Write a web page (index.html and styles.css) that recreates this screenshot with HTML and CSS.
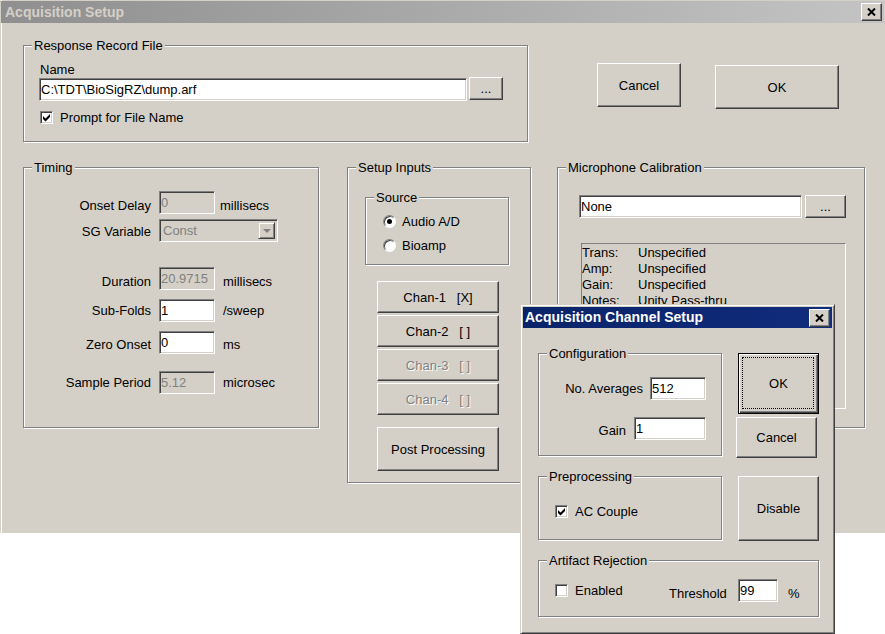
FILE: index.html
```html
<!DOCTYPE html>
<html lang="en">
<head>
    <meta charset="UTF-8">
    <title>Acquisition Setup</title>
    <link rel="stylesheet" href="styles.css">
</head>
<body>
    <!-- Main window -->
    <div class="window main-window">
        <div class="titlebar inactive">
            <span class="title">Acquisition Setup</span>
            <span class="close-btn">
                <svg width="9" height="8" viewBox="0 0 9 8"><path d="M1 0.5 L8 7.5 M8 0.5 L1 7.5" stroke="#000" stroke-width="2"/></svg>
            </span>
        </div>

        <div class="main-body">
            <div class="top-row">
                <div class="group response-group">
                    <span class="group-title">Response Record File</span>
                    <div class="name-label">Name</div>
                    <div class="file-row">
                        <input class="field file-field" type="text" value="C:\TDT\BioSigRZ\dump.arf">
                        <button class="btn browse-btn">...</button>
                    </div>
                    <div class="check-row prompt-row">
                        <span class="checkbox checked">
                            <svg width="13" height="13" viewBox="0 0 13 13"><path d="M3 5 L5.5 7.5 L10 3 L10 6 L5.5 10.5 L3 8 Z" fill="#000"/></svg>
                        </span>
                        <span>Prompt for File Name</span>
                    </div>
                </div>
                <button class="btn main-cancel">Cancel</button>
                <button class="btn main-ok">OK</button>
            </div>

            <div class="mid-row">
                <!-- Timing -->
                <div class="group timing-group">
                    <span class="group-title">Timing</span>
                    <div class="field-row onset-row drop-4">
                        <span class="field-label">Onset Delay</span>
                        <input class="field disabled small-field" type="text" value="0" disabled>
                        <span class="unit first-unit">millisecs</span>
                    </div>
                    <div class="field-row sg-row">
                        <span class="field-label">SG Variable</span>
                        <div class="combo">
                            <span class="combo-text">Const</span>
                            <span class="combo-btn"><span class="arrow"></span></span>
                        </div>
                    </div>
                    <div class="field-row duration-row drop-4">
                        <span class="field-label">Duration</span>
                        <input class="field disabled small-field" type="text" value="20.9715" disabled>
                        <span class="unit">millisecs</span>
                    </div>
                    <div class="field-row folds-row">
                        <span class="field-label">Sub-Folds</span>
                        <input class="field small-field" type="text" value="1">
                        <span class="unit">/sweep</span>
                    </div>
                    <div class="field-row zero-row drop-2">
                        <span class="field-label">Zero Onset</span>
                        <input class="field small-field" type="text" value="0">
                        <span class="unit">ms</span>
                    </div>
                    <div class="field-row sample-row">
                        <span class="field-label">Sample Period</span>
                        <input class="field disabled small-field" type="text" value="5.12" disabled>
                        <span class="unit">microsec</span>
                    </div>
                </div>

                <!-- Setup Inputs -->
                <div class="group inputs-group">
                    <span class="group-title">Setup Inputs</span>
                    <div class="group source-group">
                        <span class="group-title">Source</span>
                        <div class="radio-row">
                            <span class="radio selected"><span class="dot"></span></span>
                            <span>Audio A/D</span>
                        </div>
                        <div class="radio-row second">
                            <span class="radio"></span>
                            <span>Bioamp</span>
                        </div>
                    </div>
                    <div class="chan-list">
                        <button class="btn chan-btn">Chan-1&nbsp;&nbsp;&nbsp;[X]</button>
                        <button class="btn chan-btn">Chan-2&nbsp;&nbsp;&nbsp;[&nbsp;]</button>
                        <button class="btn chan-btn off">Chan-3&nbsp;&nbsp;&nbsp;[&nbsp;]</button>
                        <button class="btn chan-btn off">Chan-4&nbsp;&nbsp;&nbsp;[&nbsp;]</button>
                        <button class="btn post-btn">Post Processing</button>
                    </div>
                </div>

                <!-- Microphone Calibration -->
                <div class="group mic-group">
                    <span class="group-title">Microphone Calibration</span>
                    <div class="mic-row">
                        <input class="field mic-field" type="text" value="None">
                        <button class="btn mic-browse">...</button>
                    </div>
                    <div class="mic-info">
                        <div class="info-line"><span class="info-key">Trans:</span><span>Unspecified</span></div>
                        <div class="info-line"><span class="info-key">Amp:</span><span>Unspecified</span></div>
                        <div class="info-line"><span class="info-key">Gain:</span><span>Unspecified</span></div>
                        <div class="info-line"><span class="info-key">Notes:</span><span>Unity Pass-thru</span></div>
                    </div>
                </div>
            </div>
        </div>
    </div>

    <!-- Child dialog on top -->
    <div class="window channel-dialog">
        <div class="titlebar active">
            <span class="title">Acquisition Channel Setup</span>
            <span class="close-btn">
                <svg width="9" height="8" viewBox="0 0 9 8"><path d="M1 0.5 L8 7.5 M8 0.5 L1 7.5" stroke="#000" stroke-width="2"/></svg>
            </span>
        </div>
        <div class="dialog-body">
            <div class="group config-group">
                <span class="group-title">Configuration</span>
                <div class="cfg-row">
                    <span class="cfg-label">No. Averages</span>
                    <input class="field avg-field" type="text" value="512">
                </div>
                <div class="cfg-row gain-row">
                    <span class="cfg-label">Gain</span>
                    <input class="field gain-field" type="text" value="1">
                </div>
            </div>
            <div class="dialog-buttons">
                <button class="btn default-btn">OK</button>
                <button class="btn dlg-cancel">Cancel</button>
            </div>

            <div class="group pre-group">
                <span class="group-title">Preprocessing</span>
                <div class="check-row">
                    <span class="checkbox checked">
                        <svg width="13" height="13" viewBox="0 0 13 13"><path d="M3 5 L5.5 7.5 L10 3 L10 6 L5.5 10.5 L3 8 Z" fill="#000"/></svg>
                    </span>
                    <span>AC Couple</span>
                </div>
            </div>
            <button class="btn disable-btn">Disable</button>

            <div class="group artifact-group">
                <span class="group-title">Artifact Rejection</span>
                <div class="artifact-row">
                    <div class="check-row enabled-item">
                        <span class="checkbox"></span>
                        <span>Enabled</span>
                    </div>
                    <span class="threshold-label">Threshold</span>
                    <input class="field threshold-field" type="text" value="99">
                    <span class="percent">%</span>
                </div>
            </div>
        </div>
    </div>
</body>
</html>
```

FILE: styles.css
```css
* {
    box-sizing: border-box;
}
body {
    margin: 0;
    background-color: #fff;
    font-family: "Liberation Sans", Arial, sans-serif;
    font-size: 13px;
    line-height: 15px;
    color: #000;
}
input, button {
    font-family: "Liberation Sans", Arial, sans-serif;
    font-size: 13px;
    color: #000;
    margin: 0;
    outline: none;
}

/* windows */
.window {
    background-color: #d4d0c8;
}
.main-window {
    width: 885px;
    height: 533px;
    padding-top: 1px;
    box-shadow: inset 1px 0 #d4d0c8, inset 2px 0 #fff;
}
.channel-dialog {
    position: absolute;
    left: 520px;
    top: 304px;
    width: 315px;
    height: 330px;
    padding: 2px;
    border: 1px solid;
    border-color: #d4d0c8 #404040 #404040 #d4d0c8;
    box-shadow: inset 1px 1px #fff, inset -1px -1px #808080;
}

.titlebar {
    display: flex;
    align-items: center;
    justify-content: space-between;
    height: 22px;
    padding: 0 2px 0 4px;
    font-size: 14px;
    font-weight: bold;
}
.titlebar.inactive {
    margin: 0 1px 0 1px;
    background: linear-gradient(to right, #8f8f8f, #c4c4c4);
    color: #d4d0c8;
}
.titlebar.active {
    height: 21px;
    padding-left: 2px;
    background: linear-gradient(to right, #0a246a, #102c7c);
    color: #fff;
}
.close-btn {
    display: flex;
    align-items: center;
    justify-content: center;
    width: 21px;
    height: 18px;
    background-color: #d4d0c8;
    border: 1px solid;
    border-color: #fff #404040 #404040 #fff;
    box-shadow: inset -1px -1px #808080;
}

/* common controls */
.btn {
    background-color: #d4d0c8;
    border: 1px solid;
    border-color: #fff #404040 #404040 #fff;
    box-shadow: inset -1px -1px #808080;
    padding: 0;
    cursor: pointer;
}
.field {
    height: 23px;
    padding: 0 1px;
    background-color: #fff;
    border: 1px solid;
    border-color: #808080 #fff #fff #808080;
    box-shadow: inset 1px 1px #404040, inset -1px -1px #d4d0c8;
}
.field.disabled {
    background-color: #d4d0c8;
    color: #808080;
}
.group {
    position: relative;
    border: 1px solid #808080;
    box-shadow: inset 1px 1px #fff, 1px 1px #fff;
}
.group-title {
    position: absolute;
    top: -8px;
    left: 8px;
    padding: 0 2px;
    background-color: #d4d0c8;
    white-space: nowrap;
}
.check-row {
    display: flex;
    align-items: center;
    height: 15px;
}
.checkbox {
    flex: none;
    width: 13px;
    height: 13px;
    margin-right: 7px;
    background-color: #fff;
    border: 1px solid;
    border-color: #808080 #fff #fff #808080;
    box-shadow: inset 1px 1px #404040, inset -1px -1px #d4d0c8;
}
.checkbox svg {
    display: block;
    margin: -1px 0 0 -1px;
}
.radio {
    position: relative;
    flex: none;
    width: 13px;
    height: 13px;
    margin-right: 6px;
    border-radius: 50%;
    background-color: #fff;
    border: 1px solid;
    border-color: #808080 #fff #fff #808080;
    box-shadow: inset 1px 1px #404040;
}
.radio .dot {
    position: absolute;
    left: 3px;
    top: 3px;
    width: 5px;
    height: 5px;
    border-radius: 50%;
    background-color: #000;
}

/* main body */
.main-body {
    padding-left: 23px;
}
.top-row {
    display: flex;
    align-items: flex-start;
    margin-top: 22px;
}
.response-group {
    width: 505px;
    height: 97px;
    padding: 16px 0 0 15px;
}
.name-label {
    margin-left: 1px;
}
.file-row {
    display: flex;
    margin-top: 1px;
}
.file-field {
    width: 428px;
}
.browse-btn {
    width: 34px;
    height: 23px;
    margin-left: 2px;
    margin-top: -1px;
}
.prompt-row {
    margin: 9px 0 0 1px;
}
.main-cancel {
    width: 84px;
    height: 44px;
    margin: 18px 0 0 69px;
}
.main-ok {
    width: 124px;
    height: 44px;
    margin: 20px 0 0 34px;
}

.mid-row {
    display: flex;
    align-items: flex-start;
    margin-top: 25px;
}

/* timing */
.timing-group {
    width: 296px;
    height: 261px;
    padding-top: 23px;
}
.field-row {
    display: flex;
    align-items: center;
    height: 23px;
}
.field-row.drop-4 .field-label,
.field-row.drop-4 .unit {
    padding-top: 6px;
}
.field-row.drop-2 .field-label,
.field-row.drop-2 .unit {
    padding-top: 4px;
}
.field-label {
    width: 128px;
    padding-right: 1px;
    margin-right: 7px;
    text-align: right;
}
.small-field {
    width: 56px;
}
.unit {
    margin-left: 8px;
}
.unit.first-unit {
    margin-left: 5px;
}
.sg-row {
    margin-top: 5px;
}
.sg-row .field-label {
    padding-top: 2px;
}
.duration-row {
    margin-top: 25px;
}
.folds-row,
.zero-row {
    margin-top: 9px;
}
.sample-row {
    margin-top: 17px;
}
.combo {
    display: flex;
    align-items: center;
    justify-content: space-between;
    width: 119px;
    height: 23px;
    padding: 2px;
    background-color: #d4d0c8;
    border: 1px solid;
    border-color: #808080 #fff #fff #808080;
    box-shadow: inset 1px 1px #404040, inset -1px -1px #d4d0c8;
}
.combo-text {
    padding-left: 1px;
    color: #808080;
}
.combo-btn {
    display: flex;
    align-items: center;
    justify-content: center;
    width: 17px;
    height: 17px;
    border: 1px solid;
    border-color: #d4d0c8 #404040 #404040 #d4d0c8;
    box-shadow: inset 1px 1px #fff, inset -1px -1px #808080;
}
.arrow {
    width: 0;
    height: 0;
    border-left: 4px solid transparent;
    border-right: 4px solid transparent;
    border-top: 4px solid #808080;
}

/* setup inputs */
.inputs-group {
    width: 184px;
    height: 316px;
    margin-left: 28px;
}
.source-group {
    width: 144px;
    height: 68px;
    margin: 29px 0 0 17px;
    padding: 16px 0 0 17px;
}
.radio-row {
    display: flex;
    align-items: center;
    height: 15px;
}
.radio-row.second {
    margin-top: 9px;
}
.chan-list {
    display: flex;
    flex-direction: column;
    gap: 2px;
    margin: 16px 0 0 29px;
}
.chan-btn {
    width: 122px;
    height: 32px;
}
.chan-btn.off {
    color: #808080;
    text-shadow: 1px 1px #fff;
}
.post-btn {
    width: 122px;
    height: 44px;
    margin-top: 10px;
}

/* microphone */
.mic-group {
    width: 308px;
    height: 261px;
    margin-left: 26px;
    padding-top: 27px;
}
.mic-row {
    display: flex;
    padding-left: 21px;
}
.mic-field {
    width: 223px;
}
.mic-browse {
    width: 41px;
    height: 23px;
    margin-left: 3px;
}
.mic-info {
    width: 265px;
    height: 166px;
    margin: 25px 0 0 23px;
    padding-top: 1px;
    border: 1px solid;
    border-color: #808080 #fff #fff #808080;
    line-height: 16px;
}
.info-line {
    display: flex;
}
.info-key {
    width: 56px;
}

/* channel dialog */
.dialog-body {
    display: grid;
    grid-template-columns: 184px 81px;
    column-gap: 16px;
    row-gap: 18px;
    padding: 25px 0 0 15px;
}
.config-group {
    height: 103px;
    padding-top: 23px;
}
.cfg-row {
    display: flex;
    align-items: center;
    justify-content: flex-end;
    height: 23px;
    padding-right: 15px;
}
.cfg-label {
    margin-right: 7px;
}
.gain-row {
    margin-top: 17px;
}
.gain-row .cfg-label {
    margin-right: 8px;
    padding-top: 4px;
}
.avg-field {
    width: 56px;
}
.gain-field {
    width: 72px;
}
.dialog-buttons {
    display: flex;
    flex-direction: column;
}
.default-btn {
    position: relative;
    width: 81px;
    height: 61px;
    border: 1px solid #000;
    box-shadow: inset 1px 1px #fff, inset -1px -1px #404040, inset -2px -2px #808080;
}
.default-btn::after {
    content: "";
    position: absolute;
    left: 3px;
    top: 3px;
    right: 4px;
    bottom: 4px;
    border: 1px dotted #000;
}
.dlg-cancel {
    width: 81px;
    height: 41px;
    margin: 3px 0 0 -2px;
}
.pre-group {
    height: 64px;
    padding: 27px 0 0 16px;
}
.disable-btn {
    width: 81px;
    height: 65px;
}
.artifact-group {
    grid-column: 1 / 3;
    height: 57px;
    margin-top: 1px;
    padding: 18px 0 0 16px;
}
.artifact-row {
    display: flex;
    align-items: center;
    height: 23px;
}
.enabled-item {
    width: 114px;
}
.threshold-label {
    width: 69px;
    padding-top: 5px;
}
.threshold-field {
    width: 40px;
}
.percent {
    margin-left: 10px;
    padding-top: 5px;
}
```
